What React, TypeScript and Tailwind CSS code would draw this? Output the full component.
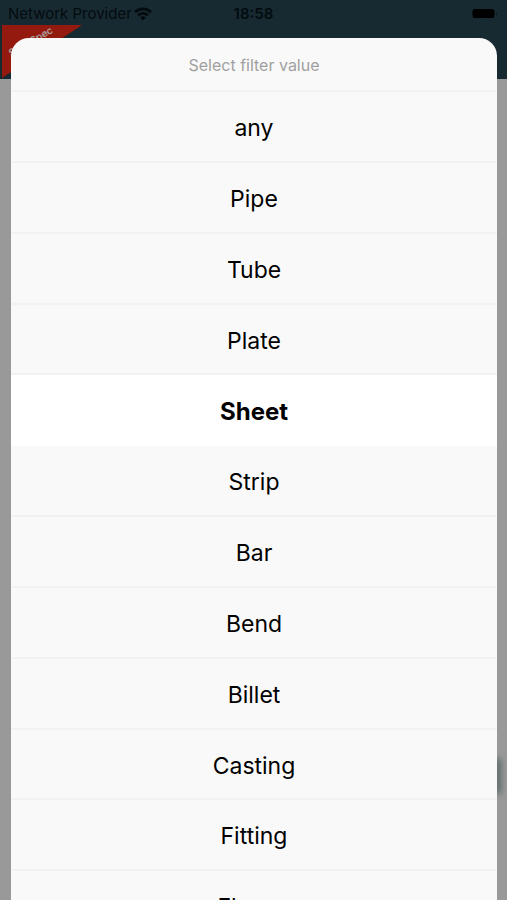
const options = [
  "any",
  "Pipe",
  "Tube",
  "Plate",
  "Sheet",
  "Strip",
  "Bar",
  "Bend",
  "Billet",
  "Casting",
  "Fitting",
  "Flange",
];

const selected = "Sheet";

function StatusBar() {
  return (
    <div className="grid h-[25px] grid-cols-[1fr_auto_1fr] items-center px-2 pt-[3px] text-[15px] leading-5 text-[#030b0f]">
      <div className="flex items-center gap-0.5">
        <span>Network Provider</span>
        <svg viewBox="0 0 18 14" className="h-[14px] w-[18px]" aria-label="Wi-Fi" role="img">
          <g fill="none" stroke="currentColor" strokeWidth="2.7">
            <path d="M1 5.2a11.4 11.4 0 0 1 16 0" />
            <path d="M4 8.4a7.1 7.1 0 0 1 10 0" />
          </g>
          <path d="M9 13.4 6.2 10.6a4 4 0 0 1 5.6 0z" fill="currentColor" />
        </svg>
      </div>
      <span className="font-semibold">18:58</span>
      <svg viewBox="0 0 27 10" className="h-[10px] w-[27px] justify-self-end" aria-label="Battery" role="img">
        <rect x="0.5" y="0" width="22" height="9" rx="2.5" fill="#000" />
        <path d="M24 3.5q2 1.5 0 3z" fill="#07141a" />
      </svg>
    </div>
  );
}

export default function App() {
  return (
    <div className="relative flex h-screen flex-col overflow-hidden bg-[#999999] font-['Inter','Liberation_Sans',sans-serif]">
      <header className="flex h-[79px] flex-col bg-[#182a31] pb-px pl-0.5">
        <div className="-ml-0.5">
          <StatusBar />
        </div>
        <div className="flex w-20 flex-1 items-start bg-[#94190e] pt-[10px] pl-1 [clip-path:polygon(0_0,100%_0,0_100%)]">
          <span className="-rotate-[30deg] text-[10px] leading-3 font-semibold text-[#a8a09c]">
            SteelSpec
          </span>
        </div>
      </header>

      <main className="flex flex-1 items-end justify-end pr-[6px] pb-[106px]">
        <div className="h-9 w-2 rounded-full bg-[#5c6b69] blur-[3px]" />
      </main>

      <div className="absolute inset-0 overflow-hidden pt-[38px] pr-[10px] pl-[11px]">
        <section aria-labelledby="filter-title" className="overflow-hidden rounded-t-[18px] bg-[#f9f9f9]">
          <h1 id="filter-title" className="flex h-[52px] items-center justify-center pt-[2px] text-base text-[#a0a0a0]">
            Select filter value
          </h1>
          <div className="grid h-[850px] auto-rows-fr">
            {options.map((option) => (
              <button
                key={option}
                type="button"
                aria-pressed={option === selected}
                className="border-t-2 border-[#f2f2f2] pt-1 text-[23px] text-black aria-pressed:bg-white aria-pressed:text-2xl aria-pressed:font-bold [[aria-pressed=true]+&]:border-white"
              >
                {option}
              </button>
            ))}
          </div>
        </section>
      </div>
    </div>
  );
}
